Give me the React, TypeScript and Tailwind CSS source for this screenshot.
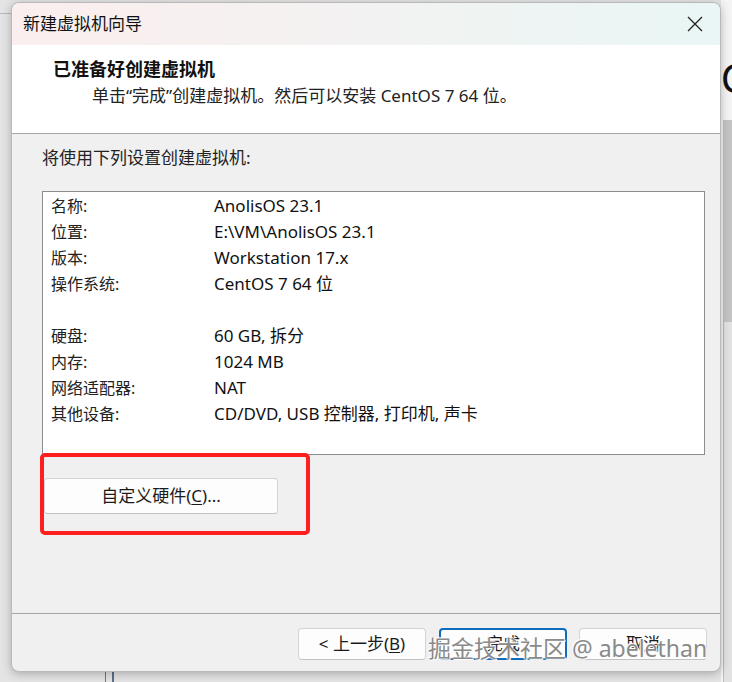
import React from "react";

const FONT = {
  fontFamily: '"Noto Sans", "Noto Sans CJK SC", sans-serif',
};

const rows: ([string, string] | null)[] = [
  ["名称:", "AnolisOS 23.1"],
  ["位置:", "E:\\VM\\AnolisOS 23.1"],
  ["版本:", "Workstation 17.x"],
  ["操作系统:", "CentOS 7 64 位"],
  null,
  ["硬盘:", "60 GB, 拆分"],
  ["内存:", "1024 MB"],
  ["网络适配器:", "NAT"],
  ["其他设备:", "CD/DVD, USB 控制器, 打印机, 声卡"],
];

function WinButton({
  children,
  primary,
  className = "",
}: {
  children: React.ReactNode;
  primary?: boolean;
  className?: string;
}) {
  return (
    <button
      className={
        "flex items-center justify-center rounded-[4px] bg-[#fdfdfd] text-[17px] text-[#1b1b1b] " +
        (primary
          ? "border-2 border-[#0f6cbd] "
          : "border border-[#d4d4d4] border-b-[#c2c2c2] ") +
        className
      }
    >
      {children}
    </button>
  );
}

export default function App() {
  return (
    <div
      className="relative h-[682px] w-[732px] overflow-hidden bg-[#e4e4e4]"
      style={FONT}
    >
      {/* background bits around the dialog */}
      <div className="absolute left-0 top-[13px] h-px w-[12px] bg-[#b8b8b8]" />
      <div className="absolute right-0 top-0 h-[682px] w-[11px] bg-[#f4f4f4]" />
      <div className="absolute right-0 top-[120px] h-[202px] w-[9px] bg-[#c4c4c4]" />
      <div className="absolute right-0 top-[322px] h-[360px] w-[9px] border-l border-[#bdbdbd] bg-[#e2e2e2]" />
      <div className="absolute right-[-14px] top-[58px] text-[40px] leading-none text-[#111]">C</div>
      <div className="absolute left-[105px] top-[672px] h-[10px] w-px bg-[#777]" />
      <div className="absolute left-[112px] top-[672px] h-[10px] w-[2px] bg-[#5b6f86]" />

      {/* dialog window */}
      <div className="relative ml-[11px] mt-[2px] flex h-[670px] w-[710px] flex-col overflow-hidden rounded-[8px] border border-[#b9b9b9] bg-[#f0f0f0] shadow-[0_2px_10px_rgba(0,0,0,0.25)]">
        {/* title bar */}
        <div className="flex h-[42px] shrink-0 items-center justify-between bg-gradient-to-r from-[#fbeeee] to-[#e9f6f5] pl-[11px] pr-[14px]">
          <span className="text-[17px] text-[#111]">新建虚拟机向导</span>
          <svg width="16" height="16" viewBox="0 0 16 16" className="mr-[3px]">
            <path d="M1 1 L15 15 M15 1 L1 15" stroke="#222" strokeWidth="1.3" />
          </svg>
        </div>

        {/* header */}
        <div className="flex h-[89px] shrink-0 flex-col border-b border-[#a6a6a6] bg-white pl-[41px] pt-[11px]">
          <div className="text-[18px] font-bold leading-[26px] text-[#111]">已准备好创建虚拟机</div>
          <div className="pl-[39px] text-[17px] leading-[28px] text-[#222]">
            单击“完成”创建虚拟机。然后可以安装 CentOS 7 64 位。
          </div>
        </div>

        {/* body */}
        <div className="relative flex flex-1 flex-col pl-[30px] pt-[12px]">
          <div className="text-[17px] leading-[24px] text-[#222]">将使用下列设置创建虚拟机:</div>
          <div className="mt-[21px] h-[264px] w-[663px] border border-[#8c8c8c] bg-white pl-[8px] pt-[1px]">
            {rows.map((r, i) =>
              r ? (
                <div key={i} className="flex h-[26px] items-center text-[17px] text-[#111]">
                  <span className="w-[163px] text-[16px] text-[#222]">{r[0]}</span>
                  <span>{r[1]}</span>
                </div>
              ) : (
                <div key={i} className="h-[26px]" />
              )
            )}
          </div>
          <WinButton className="ml-[2px] mt-[23px] h-[36px] w-[234px]">
            自定义硬件(<span className="underline underline-offset-2">C</span>)...
          </WinButton>

          {/* red highlight annotation */}
          <div className="absolute left-[28px] top-[319px] h-[82px] w-[270px] rounded-[5px] border-[4px] border-[#ff1f1f]" />
        </div>

        {/* footer */}
        <div className="flex h-[58px] shrink-0 items-start justify-end border-t border-[#a6a6a6] pr-[13px] pt-[14px]">
          <WinButton className="h-[32px] w-[128px]">
            &lt; 上一步(<span className="underline underline-offset-2">B</span>)
          </WinButton>
          <WinButton primary className="ml-[13px] h-[32px] w-[128px]">
            完成
          </WinButton>
          <WinButton className="ml-[12px] h-[32px] w-[128px]">取消</WinButton>
        </div>
      </div>

      {/* watermark */}
      <div
        className="absolute left-[428px] top-[632px] whitespace-nowrap text-[23px] leading-[32px] text-[#8a8a8a]"
        style={{ textShadow: "0 0 2px #fff, 0 0 2px #fff, 1px 1px 0 #fff, -1px -1px 0 #fff" }}
      >
        掘金技术社区 @ abelethan
      </div>
    </div>
  );
}
